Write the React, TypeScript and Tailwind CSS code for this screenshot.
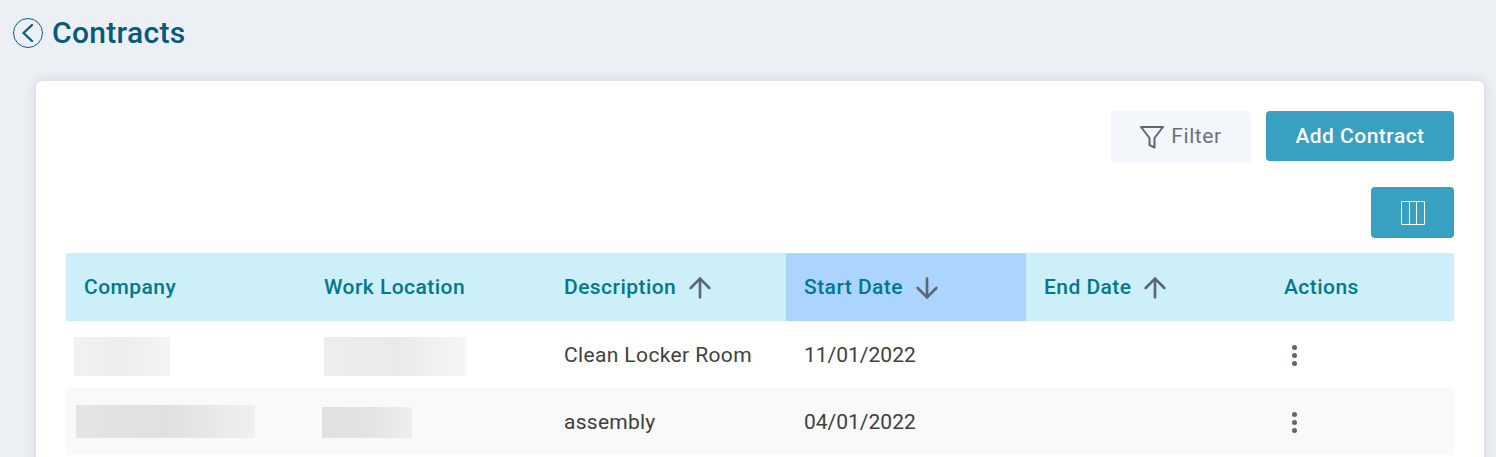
import { ArrowDown, ArrowUp } from "lucide-react";

const headers = [
  { label: "Company" },
  { label: "Work Location" },
  { label: "Description", sort: "up" },
  { label: "Start Date", sort: "down", active: true },
  { label: "End Date", sort: "up" },
  { label: "Actions" },
];

function Dots() {
  return (
    <div className="flex flex-col gap-[3px] ml-[8px] mt-[1px]">
      <span className="w-[5px] h-[5px] rounded-full bg-[#5f6670]" />
      <span className="w-[5px] h-[5px] rounded-full bg-[#5f6670]" />
      <span className="w-[5px] h-[5px] rounded-full bg-[#5f6670]" />
    </div>
  );
}

export default function App() {
  return (
    <div className="w-[1496px] h-[457px] overflow-hidden bg-[#eceff4] font-['Roboto',sans-serif]">
      {/* Page title */}
      <div className="h-[81px] pl-[13px] pt-[18px] flex items-start gap-[9px]">
        <button className="w-[30px] h-[30px] rounded-full border border-[#0b5c8a] flex items-center justify-center">
          <svg width="16" height="20" viewBox="0 0 16 20" fill="none" stroke="#0b5c8a" strokeWidth="2.4" strokeLinecap="round" strokeLinejoin="round">
            <path d="M12 2 3.500 10l8.500 8" />
          </svg>
        </button>
        <h1 className="text-[30px] leading-[30px] font-medium text-[#04597f] tracking-[0.33px]">Contracts</h1>
      </div>

      <div className="ml-[36px] w-[1448px] h-[400px] bg-white rounded-t-[6px] shadow-[0_0_12px_rgba(40,50,80,0.14)] pt-[30px] px-[30px]">
        {/* Toolbar */}
        <div className="flex justify-end items-start gap-[15px]">
          <button className="w-[140px] h-[52px] rounded-[4px] bg-[#f3f6fb] flex items-center justify-center gap-[7px] text-[21px] text-[#6a717a] tracking-[0.6px]">
            <svg width="24" height="24" viewBox="0 0 24 24" fill="none" stroke="#5f6870" strokeWidth="2" strokeLinejoin="round">
              <path d="M1 2h22l-8.500 11v9.500l-5-2.500v-7z" />
            </svg>
            Filter
          </button>
          <button className="w-[188px] h-[50px] pt-[2px] rounded-[4px] bg-[#38a0c0] text-white text-[21px] font-medium tracking-[0.48px]">
            Add Contract
          </button>
        </div>
        <div className="flex justify-end mt-[24px]">
          <button className="w-[83px] h-[51px] rounded-[4px] bg-[#38a0c0] flex items-center justify-center">
            <svg width="24" height="24" viewBox="0 0 24 24" fill="none" stroke="#fff" strokeWidth="1">
              <path d="M.5.5h23v23H.5zM8.500.5v23M15.500.5v23" />
            </svg>
          </button>
        </div>

        {/* Table */}
        <div className="mt-[15px]">
          <div className="grid grid-cols-[240px_240px_240px_240px_240px_188px] h-[68px] bg-[#cdeff9]">
            {headers.map((h) => (
              <div key={h.label} className={`flex items-center pl-[18px] pt-[2px] gap-[8px] text-[21px] font-medium text-[#02788f] tracking-[0.45px] ${h.active ? "bg-[#abd5ff]" : ""}`}>
                {h.label}
                {h.sort === "up" && <ArrowUp size={32} color="#5f6670" strokeWidth={2} />}
                {h.sort === "down" && <ArrowDown size={32} color="#5f6670" strokeWidth={2} />}
              </div>
            ))}
          </div>

          <div className="grid grid-cols-[240px_240px_240px_240px_240px_188px] h-[67px] items-center text-[21px] text-[#3f3f3f]">
            <div className="pl-[8px]">
              <div className="w-[96px] h-[39px] bg-gradient-to-r from-[#f0f1f1] via-[#eceeed] to-[#f4f5f5] mt-[4px]" />
            </div>
            <div className="pl-[18px]">
              <div className="w-[142px] h-[39px] bg-gradient-to-r from-[#eceeee] via-[#e9eaea] to-[#f6f6f6] mt-[4px]" />
            </div>
            <div className="pl-[18px] pt-[2px] tracking-[0.37px]">Clean Locker Room</div>
            <div className="pl-[18px] pt-[2px]">11/01/2022</div>
            <div />
            <div className="pl-[18px]"><Dots /></div>
          </div>

          <div className="grid grid-cols-[240px_240px_240px_240px_240px_188px] h-[67px] items-center bg-[#f9f9f9] text-[21px] text-[#3f3f3f]">
            <div className="pl-[10px]">
              <div className="w-[179px] h-[33px] bg-gradient-to-r from-[#e3e4e3] via-[#dfe0e0] to-[#eff0ef]" />
            </div>
            <div className="pl-[16px]">
              <div className="w-[90px] h-[31px] bg-gradient-to-r from-[#e0e0e0] via-[#e3e3e3] to-[#efefef] mt-[2px]" />
            </div>
            <div className="pl-[18px] pt-[2px] tracking-[0.26px]">assembly</div>
            <div className="pl-[18px] pt-[2px]">04/01/2022</div>
            <div />
            <div className="pl-[18px]"><Dots /></div>
          </div>
        </div>
      </div>
    </div>
  );
}
